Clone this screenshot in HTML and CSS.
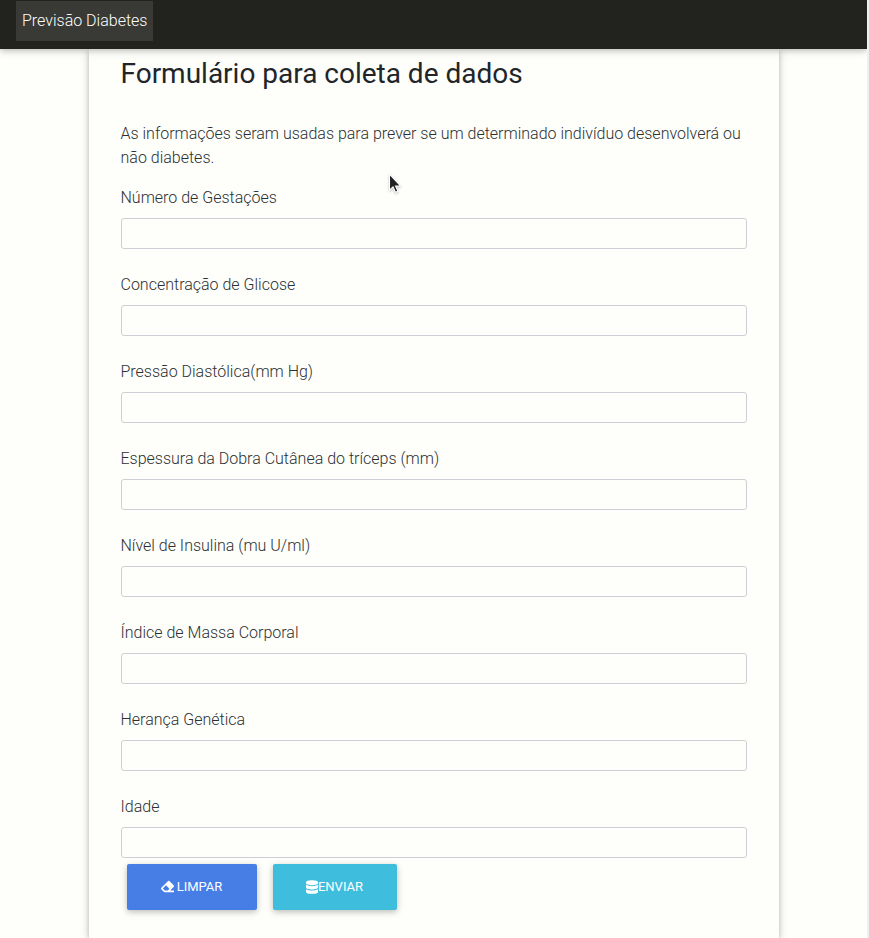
FILE: index.html
```html
<!DOCTYPE html>
<html lang="pt-BR">
<head>
<meta charset="utf-8">
<title>Previsão Diabetes</title>
<link rel="stylesheet" href="styles.css">
</head>
<body>
<nav class="navbar"><a class="nav-link">Previsão Diabetes</a></nav>
<main class="card">
<h1>Formulário para coleta de dados</h1>
<p class="intro">As informações seram usadas para prever se um determinado indivíduo desenvolverá ou não diabetes.</p>
<form>
<div class="field"><label for="f1">Número de Gestações</label><input id="f1"></div>
<div class="field"><label for="f2">Concentração de Glicose</label><input id="f2"></div>
<div class="field"><label for="f3">Pressão Diastólica(mm Hg)</label><input id="f3"></div>
<div class="field"><label for="f4">Espessura da Dobra Cutânea do tríceps (mm)</label><input id="f4"></div>
<div class="field"><label for="f5">Nível de Insulina (mu U/ml)</label><input id="f5"></div>
<div class="field"><label for="f6">Índice de Massa Corporal</label><input id="f6"></div>
<div class="field"><label for="f7">Herança Genética</label><input id="f7"></div>
<div class="field"><label for="f8">Idade</label><input id="f8"></div>
<div class="actions">
<button type="reset" class="btn clear"><svg class="eraser" viewBox="0 0 512 512"><path fill="currentColor" d="M497.941 273.941c18.745-18.745 18.745-49.137 0-67.882l-160-160c-18.745-18.745-49.136-18.746-67.883 0l-256 256c-18.745 18.745-18.745 49.137 0 67.882l96 96A48.004 48.004 0 0 0 144 480h356c6.627 0 12-5.373 12-12v-40c0-6.627-5.373-12-12-12H355.883l142.058-142.059zm-302.627-62.627l137.373 137.373L265.373 416H150.628l-80-80 124.686-124.686z"/></svg><span>LIMPAR</span></button>
<button type="button" class="btn send"><svg class="database" viewBox="0 0 448 512"><path fill="currentColor" d="M448 73.143v45.714C448 159.143 347.667 192 224 192S0 159.143 0 118.857V73.143C0 32.857 100.333 0 224 0s224 32.857 224 73.143zM448 176v102.857C448 319.143 347.667 352 224 352S0 319.143 0 278.857V176c48.125 33.143 136.208 48.572 224 48.572S399.874 209.143 448 176zm0 160v102.857C448 479.143 347.667 512 224 512S0 479.143 0 438.857V336c48.125 33.143 136.208 48.572 224 48.572S399.874 369.143 448 336z"/></svg><span>ENVIAR</span></button>
</div>
</form>
</main>
<svg class="cursor" viewBox="0 0 12 19"><path d="M1 1v14.5l3.2-3 2.2 5 2.3-1-2.2-4.8H11z" fill="#222" stroke="#fff" stroke-width="1"/></svg>
</body>
</html>
```
FILE: styles.css
```css
* { box-sizing: border-box; }
html { background: #f0f0f0; overflow: hidden; }
body { margin: 0; width: 867px; height: 938px; overflow: hidden; font: 300 16px/24px Roboto, sans-serif; color: #2d3033; background: #fefffb; }
.navbar { position: relative; z-index: 1; height: 49px; padding: 1px 16px 8px; background: #22231e; box-shadow: 0 2px 5px rgba(0,0,0,.16), 0 2px 10px rgba(0,0,0,.12); }
.nav-link { display: inline-block; height: 40px; padding: 8px 6px; color: #fff; background: #393a36; }
.card { width: 690px; height: 889px; margin-left: 88.5px; padding: 8px 32px 0; box-shadow: 0 2px 5px rgba(0,0,0,.2), 0 2px 10px rgba(0,0,0,.14); }
h1 { margin: 0 0 31px; font-size: 28px; line-height: 34px; font-weight: 400; letter-spacing: -.01px; color: #212529; }
.intro { margin: 0 0 16px; }
.field { height: 71px; margin-bottom: 16px; }
label { display: block; height: 24px; margin-bottom: 8px; }
input { display: block; width: 626px; height: 31px; border: 1px solid #cccfd6; border-radius: 3px; background: #fefffb; outline: 0; }
.actions { display: flex; gap: 16px; padding-left: 6px; margin-top: -18px; }
.btn { display: flex; align-items: center; justify-content: center; width: 130px; height: 46px; padding: 0; border: 0; border-radius: 2px; color: #fff; background: #477ee5; font: 400 13px/20px Roboto, sans-serif; box-shadow: 0 2px 5px rgba(0,0,0,.16), 0 2px 10px rgba(0,0,0,.12); }
.send { width: 124px; background: #3fbddd; }
.eraser { width: 13px; height: 13px; margin: 0 3px 2px 0; }
.database { width: 12px; height: 14px; margin-bottom: 1px; }
.cursor { position: absolute; left: 388px; top: 173px; width: 14px; height: 21px; filter: drop-shadow(0 1px 1px rgba(0,0,0,.25)); }
```
